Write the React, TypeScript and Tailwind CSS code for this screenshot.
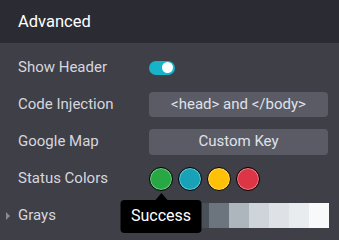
import React from "react";

const statusColors = [
  { name: "Success", color: "bg-[#28a745]" },
  { name: "Info", color: "bg-[#17a2b8]" },
  { name: "Warning", color: "bg-[#ffc107]" },
  { name: "Danger", color: "bg-[#dc3545]" },
];

const grays = [
  "bg-[#212529]",
  "bg-[#343a40]",
  "bg-[#495057]",
  "bg-[#6c757d]",
  "bg-[#adb5bd]",
  "bg-[#ced4da]",
  "bg-[#dee2e6]",
  "bg-[#e9ecef]",
  "bg-[#f8f9fa]",
];

const Row = ({ label, children, caret }: { label: string; children: React.ReactNode; caret?: boolean }) => (
  <div className="relative flex items-center h-[37px]">
    {caret && (
      <span className="absolute left-[6px] top-1/2 -translate-y-1/2 w-0 h-0 border-y-[4px] border-y-transparent border-l-[4px] border-l-[#8a8a94]" />
    )}
    <span className="w-[149px] shrink-0 pl-[18px] text-[15px] text-[#d6d6de]">{label}</span>
    <div className="flex-1 flex items-center">{children}</div>
  </div>
);

const App = () => {
  return (
    <div
      className="w-[339px] h-[240px] overflow-hidden bg-[#3f3f48] flex flex-col"
      style={{ fontFamily: "Roboto, 'Liberation Sans', sans-serif" }}
    >
      <div className="h-[43px] shrink-0 bg-[#2b2b33] flex items-center pl-[18px] pt-[2px]">
        <h2 className="text-[16.5px] text-white">Advanced</h2>
      </div>

      <div className="pt-[6px] pr-[11px]">
        <Row label="Show Header">
          <div className="w-[26px] h-[14px] rounded-full bg-[#17b3c8] flex items-center justify-end pr-[2px]">
            <div className="w-[11px] h-[11px] rounded-full bg-white" />
          </div>
        </Row>

        <Row label="Code Injection">
          <button className="w-full h-[25px] rounded-[4px] bg-[#5b5b66] text-[15px] text-[#dfe2ea]">
            &lt;head&gt; and &lt;/body&gt;
          </button>
        </Row>

        <Row label="Google Map">
          <button className="w-full h-[26px] rounded-[4px] bg-[#5b5b66] text-[15px] text-[#dfe2ea]">
            Custom Key
          </button>
        </Row>

        <Row label="Status Colors">
          <div className="flex gap-[5px]">
            {statusColors.map((s, i) => (
              <div key={s.name} className="relative">
                <div
                  className={`w-[24px] h-[24px] rounded-full border border-black shadow-[inset_0_0_0_1px_rgba(255,255,255,0.35)] ${s.color}`}
                />
                {i === 0 && (
                  <div className="absolute left-1/2 -translate-x-1/2 top-[26px] z-10 flex flex-col items-center">
                    <span className="w-0 h-0 border-x-[6px] border-x-transparent border-b-[7px] border-b-black" />
                    <span className="w-[81px] h-[33px] rounded-[4px] bg-black text-white text-[16px] flex items-center justify-center">
                      Success
                    </span>
                  </div>
                )}
              </div>
            ))}
          </div>
        </Row>

        <Row label="Grays" caret>
          <div className="flex h-[25px]">
            {grays.map((g) => (
              <div key={g} className={`w-[20px] h-full ${g}`} />
            ))}
          </div>
        </Row>
      </div>
    </div>
  );
};

export default App;
